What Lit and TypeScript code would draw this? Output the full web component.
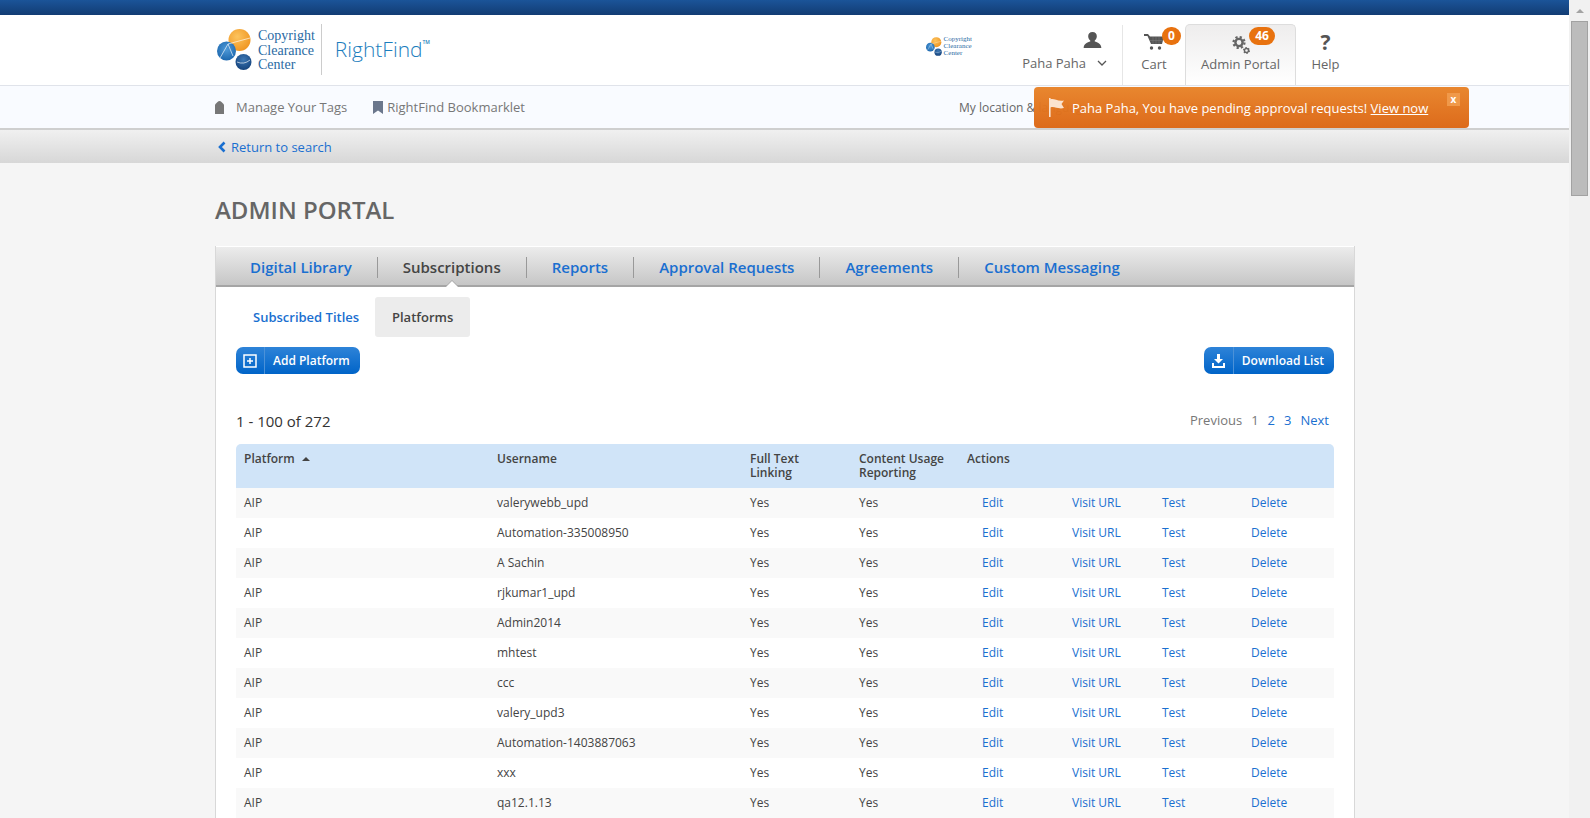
import { LitElement, html, css } from 'lit';
import { customElement } from 'lit/decorators.js';

const logo = (w: number, h: number) => html`
  <svg width=${w} height=${h} viewBox="0 0 35 41">
    <defs>
      <radialGradient id="org" cx="0.4" cy="0.35" r="0.7"><stop offset="0" stop-color="#fcc45e"/><stop offset="1" stop-color="#ef9420"/></radialGradient>
      <radialGradient id="blu" cx="0.5" cy="0.4" r="0.7"><stop offset="0" stop-color="#4f9ad8"/><stop offset="1" stop-color="#1560a8"/></radialGradient>
      <radialGradient id="nav" cx="0.5" cy="0.35" r="0.7"><stop offset="0" stop-color="#3d78b4"/><stop offset="1" stop-color="#123f78"/></radialGradient>
    </defs>
    <circle cx="22.500" cy="11" r="11" fill="url(#org)"/>
    <circle cx="9.500" cy="22" r="9.500" fill="url(#blu)"/>
    <circle cx="26.500" cy="33" r="8" fill="url(#nav)"/>
    <path d="M3 29 L11 15 L16 27 M11 15 Q22 12 33 9 M20 33 Q27 36 33 31" fill="none" stroke="#fff" stroke-width=".8" opacity=".8"/>
  </svg>`;

const rows = [
  'valerywebb_upd', 'Automation-335008950', 'A Sachin', 'rjkumar1_upd', 'Admin2014', 'mhtest',
  'ccc', 'valery_upd3', 'Automation-1403887063', 'xxx', 'qa12.1.13',
];

@customElement('app-root')
export class AppRoot extends LitElement {
  static styles = css`
    :host {
      display: flex;
      height: 818px;
      overflow: hidden;
      font-family: 'Open Sans', 'Noto Sans', sans-serif;
      font-size: 12px;
      color: #444;
      background: #f5f5f5;
    }
    a { color: #1a6fd0; text-decoration: none; }
    .page { flex: 1; min-width: 0; display: flex; flex-direction: column; }
    .scroll { width: 21px; flex: none; background: #f1f1f1; display: flex; flex-direction: column; align-items: center; }
    .scroll .arrow { width: 0; height: 0; margin: 9px 0 8px; border: 4px solid transparent; border-top: 0; border-bottom: 4px solid #a3a3a3; }
    .scroll .thumb { width: 17px; height: 175px; box-sizing: border-box; background: #bcbcbc; border: 1px solid #a2a2a2; }
    .top { height: 15px; flex: none; background: linear-gradient(#1b5499, #123c73); }
    .wrap { width: 1140px; margin-left: 215px; box-sizing: border-box; }
    .head { height: 70px; flex: none; background: #fff; border-bottom: 1px solid #e0e3ea; }
    .head .wrap { display: flex; height: 100%; align-items: stretch; }
    .brand { display: flex; align-items: center; padding-top: 1px; }
    .cc { display: flex; align-items: center; gap: 6px; padding: 0 6px 0 2px; height: 51px; border-right: 1px solid #ccc; margin-top: -2px; }
    .cc .cctext { padding-top: 3px; }
    .cctext { font-family: 'Liberation Serif', serif; color: #2a6aa3; font-size: 14px; line-height: 14.5px; }
    .rf { font-size: 21px; color: #1b7dbd; margin-left: 13px; margin-top: -3px; font-weight: 300; display: flex; align-items: flex-start; }
    .rf sup { font-size: 5px; line-height: 1; margin-top: 5px; font-weight: 600; }
    .utils { margin-left: auto; display: flex; align-items: stretch; height: 100%; position: relative; }
    .mini { display: flex; align-items: center; margin-right: 48px; gap: 2px; margin-top: -7px; }
    .mini .cctext { font-size: 7px; line-height: 7px; }
    .util { display: flex; flex-direction: column; align-items: center; color: #666; font-size: 13px; position: relative; box-sizing: border-box; padding-top: 15px; }
    .util .ic { height: 24px; display: flex; align-items: center; justify-content: center; }
    .util .lbl { margin-top: 1px; line-height: 18px; white-space: nowrap; }
    .user { width: 103px; align-items: flex-end; border-right: 1px solid #e6e6e6; margin-top: 10px; padding: 5px 15px 0 0; height: 60px; }
    .user .ic { height: 20px; margin-right: 5px; }
    .user .lbl { display: flex; gap: 11px; align-items: center; margin-top: 4px; }
    .cart { width: 62px; }
    .admin { width: 111px; margin-top: 9px; padding-top: 5px; border: 1px solid #ddd; border-bottom: 0; border-radius: 5px 5px 0 0; background: linear-gradient(#eeeded, #fff); height: 61px; }
    .admin svg { margin-top: 5px; }
    .help { width: 59px; }
    .qm { font-size: 21px; font-weight: 700; color: #555; line-height: 1; }
    .badge { position: absolute; background: #e8720f; color: #fff; font-size: 12px; font-weight: 700; line-height: 18px; height: 18px; text-align: center; border-radius: 9px; }
    .cart .badge { width: 19px; top: 12px; left: 39px; }
    .admin .badge { width: 26px; top: 2px; left: 63px; }
    .sub { height: 44px; flex: none; box-sizing: border-box; background: #f9fbff; border-bottom: 2px solid #cfcfcf; }
    .sub .wrap { display: flex; align-items: center; height: 100%; color: #777; font-size: 13px; position: relative; }
    .sub .tag { display: flex; align-items: center; gap: 12px; }
    .sub .bm { display: flex; align-items: center; gap: 4px; margin-left: 26px; }
    .loc { position: absolute; left: 744px; color: #666; font-size: 12px; display: flex; white-space: nowrap; }
    .loc .country { margin-left: 96px; }
    .loc .lang { position: absolute; left: 331px; }
    .toast {
      position: absolute; left: 819px; top: 1px; width: 435px; height: 41px; box-sizing: border-box;
      background: linear-gradient(rgba(232, 131, 40, .97), rgba(220, 102, 20, .97)); border-radius: 4px; color: #fff; font-size: 13px;
      display: flex; align-items: center; padding-left: 15px; z-index: 2;
    }
    .toast .msg { margin-left: 8px; white-space: nowrap; }
    .toast .x { position: absolute; right: 9px; top: 6px; width: 13px; height: 13px; background: #f0994a; color: #fff; font-size: 10px; line-height: 12px; font-weight: 700; text-align: center; }
    .ret { height: 33px; flex: none; background: linear-gradient(#f0f0f0, #d7d7d7); }
    .ret .wrap { display: flex; align-items: center; gap: 5px; height: 100%; font-size: 13px; }
    .ret svg { margin-left: 2px; }
    h1 { margin: 32px 0 21px; font-size: 24px; line-height: 30px; font-weight: 600; color: #666; }
    .panel { background: #fff; border: 1px solid #d8d8d8; border-top: 0; border-bottom: 0; height: 573px; overflow: hidden; }
    .tabs {
      height: 41px; box-sizing: border-box; display: flex; align-items: center; padding: 2px 0 0 9px; position: relative;
      background: linear-gradient(#ececec, #c6c6c6); border-bottom: 2px solid #a5a5a5; border-top: 1px solid #fff;
      font-size: 15px; font-weight: 600;
    }
    .tabs a { padding: 0 25px; border-right: 1px solid #999; line-height: 21px; }
    .tabs a:last-child { border: 0; }
    .tabs a.on { color: #444; position: relative; }
    .tabs a.on::after {
      content: ''; position: absolute; left: 50%; bottom: -10px; margin-left: -7px; width: 0; height: 0;
      border: 7px solid transparent; border-top: 0; border-bottom-color: #fff;
      filter: drop-shadow(0 -1px 0 #a5a5a5);
    }
    .subtabs { display: flex; margin: 10px 0 0 20px; font-size: 13px; font-weight: 600; }
    .subtabs > * { height: 40px; line-height: 40px; border-radius: 3px; }
    .subtabs .on { background: #ececec; color: #444; width: 95px; text-align: center; }
    .subtabs a { padding: 0 16px 0 17px; }
    .actions { display: flex; justify-content: space-between; margin: 10px 20px 0; }
    .btn { display: flex; align-items: center; height: 27px; border-radius: 7px; color: #fff; font-size: 12px; font-weight: 600; background: linear-gradient(#2e83d8, #0064c8); }
    .btn .i { height: 100%; width: 29px; display: flex; align-items: center; justify-content: center; border-right: 1px solid #4b91d8; box-sizing: border-box; }
    .btn .t { padding: 0 10px 0 8px; }
    .btn.dl .i { width: 30px; }
    .meta { display: flex; justify-content: space-between; margin: 35px 25px 0 20px; align-items: center; height: 24px; }
    .count { font-size: 15px; color: #333; }
    .pager { display: flex; gap: 9px; font-size: 13px; color: #777; margin-top: -3px; }
    table { margin: 11px 20px 0; width: 1098px; border-collapse: collapse; table-layout: fixed; }
    col:nth-child(1), col:nth-child(2) { width: 253px; }
    col:nth-child(3) { width: 109px; }
    col:nth-child(4) { width: 108px; }
    col:nth-child(5) { width: 104px; }
    col:nth-child(6) { width: 90px; }
    col:nth-child(7) { width: 89px; }
    col:nth-child(8) { width: 92px; }
    th { text-align: left; vertical-align: top; background: #d0e4f8; color: #444; font-weight: 600; font-size: 12px; line-height: 14px; padding: 8px 8px 7px; height: 44px; box-sizing: border-box; }
    th:first-child { border-top-left-radius: 5px; }
    th:last-child { border-top-right-radius: 5px; }
    td { height: 30px; padding: 0 8px 2px; font-size: 12px; color: #444; box-sizing: border-box; }
    tbody tr:nth-child(odd) td { background: #f9f9f9; }
    td.act { padding-left: 23px; }
    td.act2 { padding-left: 9px; }
    .caret { display: inline-block; width: 0; height: 0; margin: 0 0 2px 4px; border: 4px solid transparent; border-top: 0; border-bottom: 4px solid #444; }
  `;

  render() {
    return html`
      <div class="page">
        <div class="top"></div>
        <div class="head">
          <div class="wrap">
            <div class="brand">
              <div class="cc">
                ${logo(35, 41)}
                <div class="cctext">Copyright<br />Clearance<br />Center</div>
              </div>
              <div class="rf">RightFind<sup>TM</sup></div>
            </div>
            <div class="utils">
              <div class="mini">
                ${logo(16, 19)}
                <div class="cctext">Copyright<br />Clearance<br />Center</div>
              </div>
              <div class="util user">
                <div class="ic">
                  <svg width="19" height="16" viewBox="0 0 20 17"><path fill="#555" d="M10 0c3 0 4.600 2 4.600 4.500 0 1.800-1 3.500-2.200 4.500v1c2.800 1 7 2 7 7H.6c0-5 4.200-6 7-7V9C6.400 8 5.400 6.300 5.400 4.500 5.400 2 7 0 10 0z"/></svg>
                </div>
                <div class="lbl">Paha Paha
                  <svg width="10" height="6" viewBox="0 0 10 6"><path d="M1 1l4 4 4-4" fill="none" stroke="#555" stroke-width="1.300"/></svg>
                </div>
              </div>
              <div class="util cart">
                <div class="ic">
                  <svg width="20" height="16" viewBox="0 0 20 16"><path fill="#555" d="M0 0h4l2 2.500h14L18 10H7L3.500 2H0z"/><path stroke="#777" stroke-width=".6" d="M9 3v7M12 3v7M15 3v7M6 6.500h13"/><circle cx="7.500" cy="14" r="1.700" fill="#555"/><circle cx="15.500" cy="14" r="1.700" fill="#555"/></svg>
                </div>
                <div class="lbl">Cart</div>
                <div class="badge">0</div>
              </div>
              <div class="util admin">
                <div class="ic">
                  <svg width="18" height="19" viewBox="0 0 18 19">
                    <g fill="none" stroke="#666">
                      <circle cx="7" cy="7.500" r="3.600" stroke-width="2.400"/>
                      <circle cx="7" cy="7.500" r="5.500" stroke-width="2.200" stroke-dasharray="2.200 2.120"/>
                      <circle cx="14.500" cy="15.500" r="2" stroke-width="1.400"/>
                      <circle cx="14.500" cy="15.500" r="2.900" stroke-width="1.200" stroke-dasharray="1.500 1.530"/>
                    </g>
                  </svg>
                </div>
                <div class="lbl">Admin Portal</div>
                <div class="badge">46</div>
              </div>
              <div class="util help">
                <div class="ic"><span class="qm">?</span></div>
                <div class="lbl">Help</div>
              </div>
            </div>
          </div>
        </div>
        <div class="sub">
          <div class="wrap">
            <div class="tag">
              <svg width="9" height="13" viewBox="0 0 9 13"><path fill="#777" d="M0 3.500L2.500 1a3 3 0 0 1 4 0L9 3.500V13H0z"/></svg>
              Manage Your Tags
            </div>
            <div class="bm">
              <svg width="10" height="13" viewBox="0 0 10 13"><path fill="#6b778c" d="M0 0h10v13L5 9.500 0 13z"/></svg>
              RightFind Bookmarklet
            </div>
            <div class="loc">My location &amp; language<span class="country">United States of America</span><span class="lang">English</span></div>
            <div class="toast">
              <svg width="15" height="19" viewBox="0 0 15 19"><path fill="#fbe3cf" d="M0 0h1.600v1.200C5 0 8 3.500 15 2.500l-2.500 3.500 2.500 4c-6 1.500-10-2-13.400-.5V19H0z"/></svg>
              <span class="msg">Paha Paha, You have pending approval requests! <u>View now</u></span>
              <div class="x">x</div>
            </div>
          </div>
        </div>
        <div class="ret">
          <div class="wrap">
            <svg width="9" height="12" viewBox="0 0 9 12"><path d="M7.500 1.500L3 6l4.500 4.500" fill="none" stroke="#1a6fd0" stroke-width="2.600"/></svg>
            <a href="#">Return to search</a>
          </div>
        </div>
        <div class="wrap">
          <h1>ADMIN PORTAL</h1>
          <div class="panel">
            <div class="tabs">
              <a href="#">Digital Library</a>
              <a href="#" class="on">Subscriptions</a>
              <a href="#">Reports</a>
              <a href="#">Approval Requests</a>
              <a href="#">Agreements</a>
              <a href="#">Custom Messaging</a>
            </div>
            <div class="subtabs">
              <a href="#">Subscribed Titles</a>
              <div class="on">Platforms</div>
            </div>
            <div class="actions">
              <div class="btn">
                <span class="i"><svg width="14" height="14" viewBox="0 0 14 14"><path fill="none" stroke="#fff" stroke-width="1.500" d="M1 1h12v12H1z"/><path fill="none" stroke="#fff" stroke-width="1.500" d="M7 4v6M4 7h6"/></svg></span>
                <span class="t">Add Platform</span>
              </div>
              <div class="btn dl">
                <span class="i"><svg width="13" height="14" viewBox="0 0 13 14"><path fill="#fff" d="M5 0h3v5h3L6.500 9.500 2 5h3zM0 9h2v3h9V9h2v5H0z"/></svg></span>
                <span class="t">Download List</span>
              </div>
            </div>
            <div class="meta">
              <div class="count">1 - 100 of 272</div>
              <div class="pager"><span>Previous</span><span>1</span><a href="#">2</a><a href="#">3</a><a href="#">Next</a></div>
            </div>
            <table>
              <colgroup><col /><col /><col /><col /><col /><col /><col /><col /></colgroup>
              <thead>
                <tr>
                  <th>Platform <span class="caret"></span></th>
                  <th>Username</th>
                  <th>Full Text<br />Linking</th>
                  <th>Content Usage<br />Reporting</th>
                  <th colspan="4">Actions</th>
                </tr>
              </thead>
              <tbody>
                ${rows.map(
                  (name) => html`
                    <tr>
                      <td>AIP</td>
                      <td>${name}</td>
                      <td>Yes</td>
                      <td>Yes</td>
                      <td class="act"><a href="#">Edit</a></td>
                      <td class="act2"><a href="#">Visit URL</a></td>
                      <td class="act2"><a href="#">Test</a></td>
                      <td class="act2"><a href="#">Delete</a></td>
                    </tr>
                  `
                )}
              </tbody>
            </table>
          </div>
        </div>
      </div>
      <div class="scroll"><div class="arrow"></div><div class="thumb"></div></div>
    `;
  }
}
